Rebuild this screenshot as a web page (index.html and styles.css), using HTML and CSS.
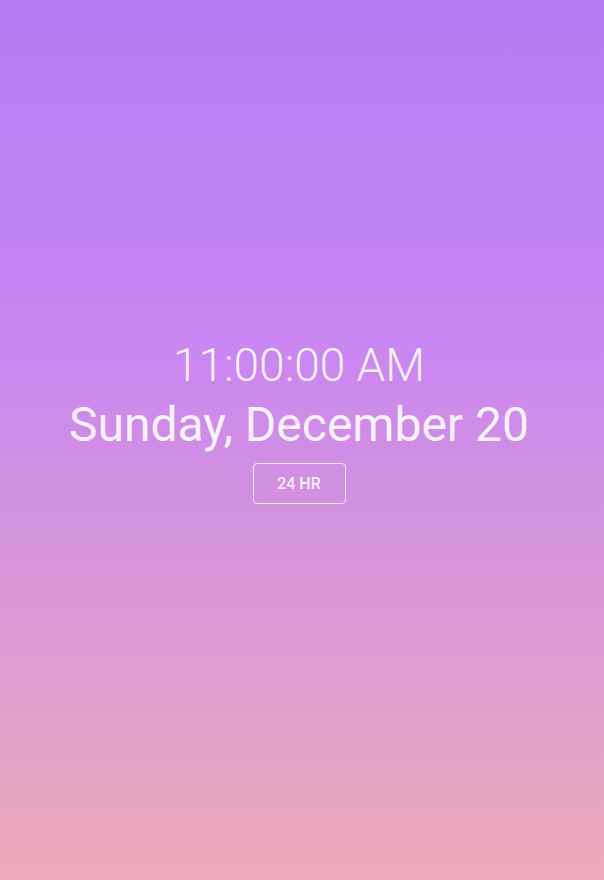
FILE: index.html
```html
<!DOCTYPE html>
<html>
<head>
<meta charset="utf-8">
<link rel="stylesheet" href="styles.css">
</head>
<body>
<main class="clock">
  <div class="time">11:00:00 AM</div>
  <div class="date">Sunday, December 20</div>
  <button class="toggle">24 HR</button>
</main>
</body>
</html>
```

FILE: styles.css
```css
html, body {
  margin: 0;
  height: 100%;
}
body {
  background: linear-gradient(to bottom, #b47cf1 0%, #c987f2 40%, #eda9b7 100%);
  font-family: Roboto, "Liberation Sans", sans-serif;
  color: #f6f2fa;
}
.clock {
  height: 100%;
  display: flex;
  flex-direction: column;
  align-items: center;
  justify-content: center;
  padding-bottom: 40px;
  padding-right: 6px;
  box-sizing: border-box;
}
.time {
  font-weight: 300;
  font-size: 46px;
  line-height: 56px;
}
.date {
  margin-top: 2px;
  font-weight: 400;
  font-size: 48px;
  line-height: 60px;
}
.toggle {
  margin-top: 8px;
  width: 93px;
  height: 41px;
  background: transparent;
  border: 1px solid #f6f2fa;
  border-radius: 4px;
  color: #f6f2fa;
  font-family: Roboto, "Liberation Sans", sans-serif;
  font-weight: 500;
  font-size: 16px;
  cursor: pointer;
}
```
